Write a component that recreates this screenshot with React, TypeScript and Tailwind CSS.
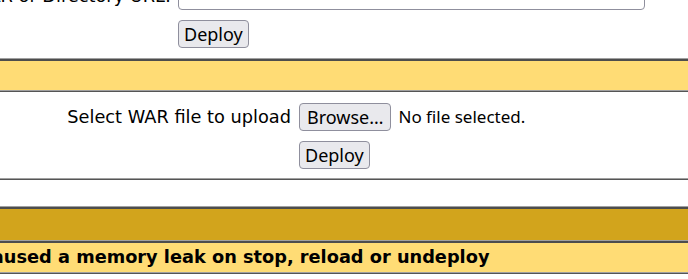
import React from "react";

function Btn({ children, wide }: { children: React.ReactNode; wide?: boolean }) {
  return (
    <button
      className={
        "h-[28px] rounded-[4px] border border-[#8f8f9d] bg-[#e9e9ed] text-[18px] leading-none text-black [font-family:'Noto_Sans',sans-serif] " +
        (wide ? "px-[7px]" : "px-[5px]")
      }
    >
      {children}
    </button>
  );
}

function Rule() {
  return (
    <div className="h-[3px] shrink-0">
      <div className="h-px bg-[#a0a0a0]" />
      <div className="h-[2px] bg-[#4d4d4d]" />
    </div>
  );
}

function RuleBottom() {
  return (
    <div className="h-[2px] shrink-0">
      <div className="h-px bg-[#a0a0a0]" />
      <div className="h-px bg-[#555555]" />
    </div>
  );
}

export default function App() {
  return (
    <div className="h-[279px] w-[688px] overflow-hidden bg-white text-black [font-family:'DejaVu_Sans',sans-serif]">
      {/* deploy directory/war on server */}
      <div className="-mt-[18px] flex items-center">
        <div className="flex w-[171px] shrink-0 justify-end text-[17.75px] whitespace-nowrap">
          <span>WAR or Directory URL:</span>
        </div>
        <input className="ml-[7px] h-[28px] w-[467px] rounded-[4px] border border-[#8f8f9d] bg-white" />
      </div>
      <div className="mt-[10px] pl-[178px]">
        <Btn>Deploy</Btn>
      </div>
      <div className="mt-[10px]">
        <Rule />
        <div className="h-[29px] bg-[#ffdc75]" />
        <RuleBottom />
      </div>

      {/* upload */}
      <div className="h-[86px] pt-[11px]">
        <div className="flex items-center">
          <div className="w-[291px] shrink-0 text-right text-[17.75px] whitespace-nowrap">Select WAR file to upload</div>
          <div className="ml-[8px]">
            <Btn wide>Browse…</Btn>
          </div>
          <span className="ml-[7px] text-[17px] [font-family:'Noto_Sans',sans-serif]">No file selected.</span>
        </div>
        <div className="mt-[10px] pl-[299px]">
          <Btn>Deploy</Btn>
        </div>
      </div>
      <RuleBottom />
      <div className="h-[26px]" />
      <Rule />
      <div className="h-[31px] bg-[#d2a41c]" />
      <Rule />
      <div className="h-[29px] overflow-hidden whitespace-nowrap bg-[#ffdc75]">
        <div className="-ml-[397px] text-[17.75px] leading-[29px] font-bold">
          Check to see if a web application has caused a memory leak on stop, reload or undeploy
        </div>
      </div>
      <RuleBottom />
    </div>
  );
}
